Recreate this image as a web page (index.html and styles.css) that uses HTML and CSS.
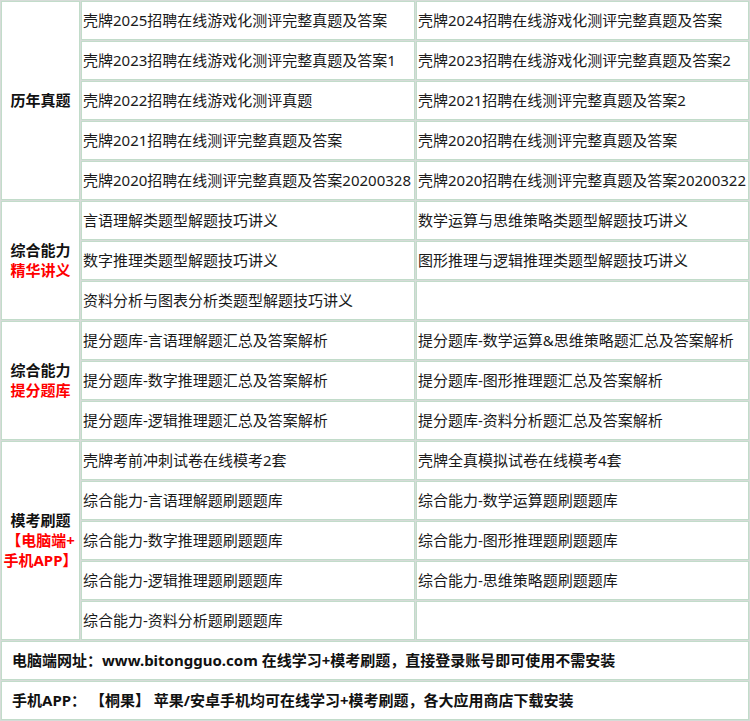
FILE: index.html
```html
<!DOCTYPE html>
<html lang="zh">
<head>
<meta charset="utf-8">
<title>壳牌招聘测评资料</title>
<link rel="stylesheet" href="styles.css">
</head>
<body>
<table class="grid">
  <colgroup>
    <col class="c-label">
    <col class="c-main">
    <col class="c-side">
  </colgroup>
  <tbody>
    <tr>
      <td class="label" rowspan="5"><span class="l-black">历年真题</span></td>
      <td class="item">壳牌2025招聘在线游戏化测评完整真题及答案</td>
      <td class="item">壳牌2024招聘在线游戏化测评完整真题及答案</td>
    </tr>
    <tr>
      <td class="item">壳牌2023招聘在线游戏化测评完整真题及答案1</td>
      <td class="item">壳牌2023招聘在线游戏化测评完整真题及答案2</td>
    </tr>
    <tr>
      <td class="item">壳牌2022招聘在线游戏化测评真题</td>
      <td class="item">壳牌2021招聘在线测评完整真题及答案2</td>
    </tr>
    <tr>
      <td class="item">壳牌2021招聘在线测评完整真题及答案</td>
      <td class="item">壳牌2020招聘在线测评完整真题及答案</td>
    </tr>
    <tr>
      <td class="item">壳牌2020招聘在线测评完整真题及答案20200328</td>
      <td class="item">壳牌2020招聘在线测评完整真题及答案20200322</td>
    </tr>
    <tr>
      <td class="label" rowspan="3"><span class="l-black">综合能力</span><br><span class="l-red">精华讲义</span></td>
      <td class="item">言语理解类题型解题技巧讲义</td>
      <td class="item">数学运算与思维策略类题型解题技巧讲义</td>
    </tr>
    <tr>
      <td class="item">数字推理类题型解题技巧讲义</td>
      <td class="item">图形推理与逻辑推理类题型解题技巧讲义</td>
    </tr>
    <tr>
      <td class="item">资料分析与图表分析类题型解题技巧讲义</td>
      <td class="item"></td>
    </tr>
    <tr>
      <td class="label" rowspan="3"><span class="l-black">综合能力</span><br><span class="l-red">提分题库</span></td>
      <td class="item">提分题库-言语理解题汇总及答案解析</td>
      <td class="item">提分题库-数学运算&amp;思维策略题汇总及答案解析</td>
    </tr>
    <tr>
      <td class="item">提分题库-数字推理题汇总及答案解析</td>
      <td class="item">提分题库-图形推理题汇总及答案解析</td>
    </tr>
    <tr>
      <td class="item">提分题库-逻辑推理题汇总及答案解析</td>
      <td class="item">提分题库-资料分析题汇总及答案解析</td>
    </tr>
    <tr>
      <td class="label" rowspan="5"><span class="l-black">模考刷题</span><br><span class="l-red">【电脑端+<br>手机APP】</span></td>
      <td class="item">壳牌考前冲刺试卷在线模考2套</td>
      <td class="item">壳牌全真模拟试卷在线模考4套</td>
    </tr>
    <tr>
      <td class="item">综合能力-言语理解题刷题题库</td>
      <td class="item">综合能力-数学运算题刷题题库</td>
    </tr>
    <tr>
      <td class="item">综合能力-数字推理题刷题题库</td>
      <td class="item">综合能力-图形推理题刷题题库</td>
    </tr>
    <tr>
      <td class="item">综合能力-逻辑推理题刷题题库</td>
      <td class="item">综合能力-思维策略题刷题题库</td>
    </tr>
    <tr>
      <td class="item">综合能力-资料分析题刷题题库</td>
      <td class="item"></td>
    </tr>
    <tr>
      <td class="note" colspan="3">电脑端网址：www.bitongguo.com 在线学习+模考刷题，直接登录账号即可使用不需安装</td>
    </tr>
    <tr>
      <td class="note" colspan="3">手机APP： 【桐果】 苹果/安卓手机均可在线学习+模考刷题，各大应用商店下载安装</td>
    </tr>
  </tbody>
</table>
</body>
</html>
```

FILE: styles.css
```css
html, body {
  margin: 0;
  padding: 0;
  background: #ffffff;
}

.grid {
  width: 750px;
  table-layout: fixed;
  border-collapse: separate;
  border-spacing: 1px;
  background: #d6dbd8;
  font-family: "Noto Sans", "Noto Sans CJK SC", sans-serif;
  font-size: 15px;
  color: #1a1a1a;
}

.c-label { width: 79px; }
.c-main { width: 334px; }
.c-side { width: 333px; }

.grid tr {
  height: 39px;
}

.grid td {
  background: #ffffff;
  border: 1px solid #c2dcca;
  vertical-align: middle;
  line-height: 20px;
  padding-top: 0;
  padding-bottom: 2px;
}

.item {
  padding-left: 1px;
  padding-right: 0;
  white-space: nowrap;
  overflow: hidden;
}

.label {
  padding-left: 0;
  padding-right: 0;
  text-align: center;
  font-weight: bold;
}

.l-black {
  color: #111111;
}

.l-red {
  color: #ff0000;
}

.note {
  padding-left: 10px;
  padding-right: 0;
  font-weight: bold;
  color: #111111;
  white-space: nowrap;
}
```
